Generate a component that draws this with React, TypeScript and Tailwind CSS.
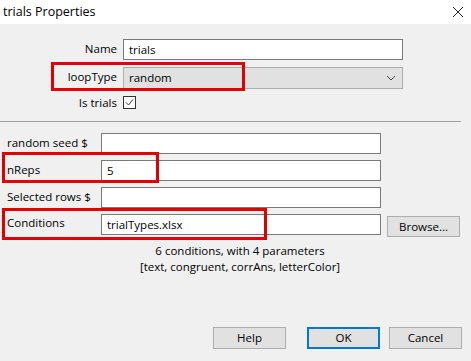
import type { ReactNode } from 'react';

const font = { fontFamily: '"Open Sans", "Noto Sans CJK SC", sans-serif' };

function TextBox({ value }: { value?: string }) {
  return (
    <div className="flex h-[21px] w-[280px] items-center border border-[#7a7a7a] bg-white px-[5px] text-[11.5px] text-black">
      {value}
    </div>
  );
}

function WinButton({ children, primary }: { children: ReactNode; primary?: boolean }) {
  return (
    <div
      className={`flex h-[22px] w-[73px] items-center justify-center bg-[#e1e1e1] text-[11.5px] text-black ${
        primary ? 'border-2 border-[#0078d7]' : 'border border-[#adadad]'
      }`}
    >
      {children}
    </div>
  );
}

function LowerRow({ label, value }: { label: string; value?: string }) {
  return (
    <div className="flex items-center">
      <span className="mt-[-2px] w-[101px] whitespace-nowrap pl-[7px] text-[11.5px] text-black">
        {label}
      </span>
      <TextBox value={value} />
    </div>
  );
}

export default function App() {
  return (
    <div
      className="relative flex h-[361px] w-[471px] flex-col bg-[#f0f0f0] leading-[16px]"
      style={font}
    >
      <div className="flex h-[24px] items-center justify-between bg-white pl-[3px] pr-[6px]">
        <span className="text-[12.5px] text-black">trials Properties</span>
        <svg width="12" height="12" viewBox="0 0 12 12" className="mr-[1px]">
          <path d="M1 1 L11 11 M11 1 L1 11" stroke="#222" strokeWidth="1" />
        </svg>
      </div>

      <div className="mt-[15px] flex flex-col gap-[7px]">
        <div className="flex items-center">
          <span className="mt-[-2px] w-[117px] text-right text-[11.5px] text-black">Name</span>
          <div className="ml-[6px]">
            <TextBox value="trials" />
          </div>
        </div>
        <div className="flex items-center">
          <span className="mt-[-2px] w-[117px] text-right text-[11.5px] text-black">loopType</span>
          <div className="ml-[6px] flex h-[22px] w-[280px] items-center justify-between border border-[#adadad] bg-[#e1e1e1] pl-[5px] pr-[6px] text-[11.5px] text-black">
            <span>random</span>
            <svg width="10" height="6" viewBox="0 0 10 6">
              <path d="M1 1 L5 5 L9 1" fill="none" stroke="#444" strokeWidth="1" />
            </svg>
          </div>
        </div>
        <div className="flex h-[13px] items-center">
          <span className="w-[117px] text-right text-[11.5px] text-black">Is trials</span>
          <div className="ml-[6px] flex h-[13px] w-[13px] items-center justify-center border border-[#333] bg-white">
            <svg width="9" height="9" viewBox="0 0 9 9">
              <path d="M1 4.5 L3.5 7 L8 1.5" fill="none" stroke="#333" strokeWidth="1" />
            </svg>
          </div>
        </div>
      </div>

      <div className="mt-[12px] h-px w-[461px] bg-[#a0a0a0]" />

      <div className="mt-[11px] flex flex-col gap-[6px]">
        <LowerRow label="random seed $" />
        <LowerRow label="nReps" value="5" />
        <LowerRow label="Selected rows $" />
        <div className="flex items-start">
          <span className="mt-[-2px] flex h-[21px] w-[101px] items-center pl-[7px] text-[11.5px] text-black">
            Conditions
          </span>
          <TextBox value="trialTypes.xlsx" />
          <div className="ml-[6px] mt-[2px] flex h-[21px] w-[73px] items-center justify-center border border-[#adadad] bg-[#e1e1e1] text-[11.5px] text-black">
            Browse...
          </div>
        </div>
      </div>

      <div className="mt-[6px] flex w-[480px] flex-col items-center text-[11.5px] leading-[16px] text-black">
        <span>6 conditions, with 4 parameters</span>
        <span>[text, congruent, corrAns, letterColor]</span>
      </div>

      <div className="mt-auto mb-[12px] flex justify-end gap-[9px] pr-[9px]">
        <div className="mr-[12px]">
          <WinButton>Help</WinButton>
        </div>
        <WinButton primary>OK</WinButton>
        <WinButton>Cancel</WinButton>
      </div>

      {/* red annotation boxes */}
      <div className="pointer-events-none absolute left-[51px] top-[62px] h-[29px] w-[194px] border-[3px] border-[#e00000]" />
      <div className="pointer-events-none absolute left-[2px] top-[152px] h-[31px] w-[157px] border-[3px] border-[#e00000]" />
      <div className="pointer-events-none absolute left-[2px] top-[208px] h-[32px] w-[265px] border-[3px] border-[#e00000]" />
    </div>
  );
}
